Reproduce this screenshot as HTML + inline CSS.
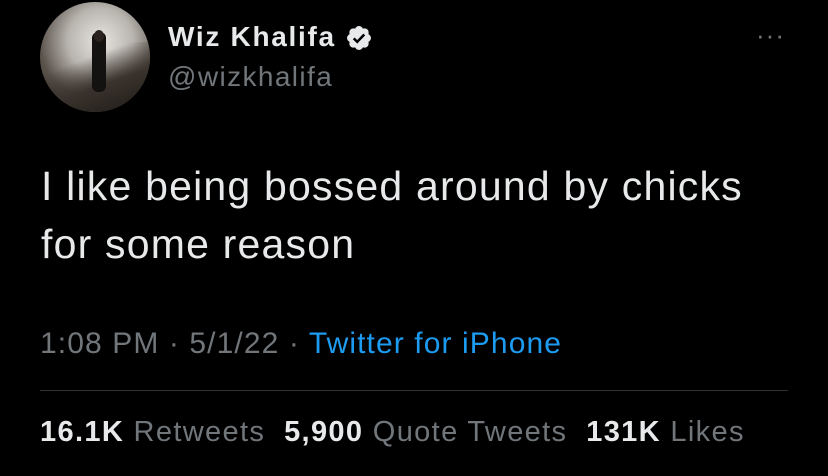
<!DOCTYPE html>
<html><head><meta charset="utf-8"><style>
html,body{margin:0;padding:0;background:#000;width:828px;height:476px;overflow:hidden;font-family:"Liberation Sans",sans-serif;}
.abs{position:absolute;white-space:nowrap;}
</style></head><body>
<div class="abs" style="left:40px;top:2px;width:110px;height:110px;border-radius:50%;overflow:hidden;background:radial-gradient(circle at 55% 35%,#e8e6e2 0%,#b8b4ae 35%,#5a534c 65%,#2a2520 100%);">
  <div style="position:absolute;left:0;top:40px;width:110px;height:70px;background:linear-gradient(160deg,transparent 30%,#3a332d 60%,#1e1a16 100%);"></div>
  <div style="position:absolute;left:52px;top:30px;width:14px;height:60px;background:#141210;border-radius:6px;"></div>
  <div style="position:absolute;left:54px;top:28px;width:10px;height:12px;background:#2a221c;border-radius:50%;"></div>
</div>
<div class="abs" style="left:168px;top:21px;font-size:28px;font-weight:bold;color:#e7e9ea;letter-spacing:1.7px;">Wiz Khalifa</div>
<svg class="abs" style="left:345px;top:24px" width="28" height="28" viewBox="0 0 24 24"><path fill="#e7e9ea" d="M22.25 12c0-1.43-.88-2.67-2.19-3.34.46-1.39.2-2.9-.81-3.91s-2.520-1.27-3.91-.81c-.66-1.31-1.91-2.19-3.34-2.19s-2.67.88-3.33 2.19c-1.4-.46-2.91-.2-3.92.81s-1.26 2.52-.8 3.91c-1.31.67-2.2 1.91-2.2 3.34s.89 2.67 2.2 3.34c-.46 1.39-.21 2.9.8 3.91s2.52 1.26 3.910.81c.67 1.31 1.91 2.19 3.34 2.19s2.68-.88 3.34-2.19c1.39.45 2.9.2 3.91-.81s1.27-2.52.81-3.91c1.31-.67 2.19-1.91 2.19-3.34z"/><path fill="none" stroke="#000" stroke-width="2.2" d="M7.5 12.3l3 3 6-6.3"/></svg>
<div class="abs" style="left:168px;top:61px;font-size:28px;color:#71767b;letter-spacing:1.4px;">@wizkhalifa</div>
<div class="abs" style="left:756px;top:20px;font-size:26px;color:#71767b;letter-spacing:1px;">···</div>
<div class="abs" style="left:41px;top:157px;font-size:41px;line-height:58px;color:#e7e9ea;letter-spacing:1.2px;">I like being bossed around by chicks<br>for some reason</div>
<div class="abs" style="left:40px;top:327px;font-size:30px;color:#71767b;letter-spacing:1.1px;">1:08 PM · 5/1/22 · <span style="color:#1d9bf0">Twitter for iPhone</span></div>
<div class="abs" style="left:40px;top:390px;width:748px;height:1px;background:#2f3336;"></div>
<div class="abs" style="left:40px;top:416px;font-size:29px;color:#71767b;letter-spacing:1.35px;"><b style="color:#e7e9ea">16.1K</b> Retweets&nbsp; <b style="color:#e7e9ea">5,900</b> Quote Tweets&nbsp; <b style="color:#e7e9ea">131K</b> Likes</div>
</body></html>
